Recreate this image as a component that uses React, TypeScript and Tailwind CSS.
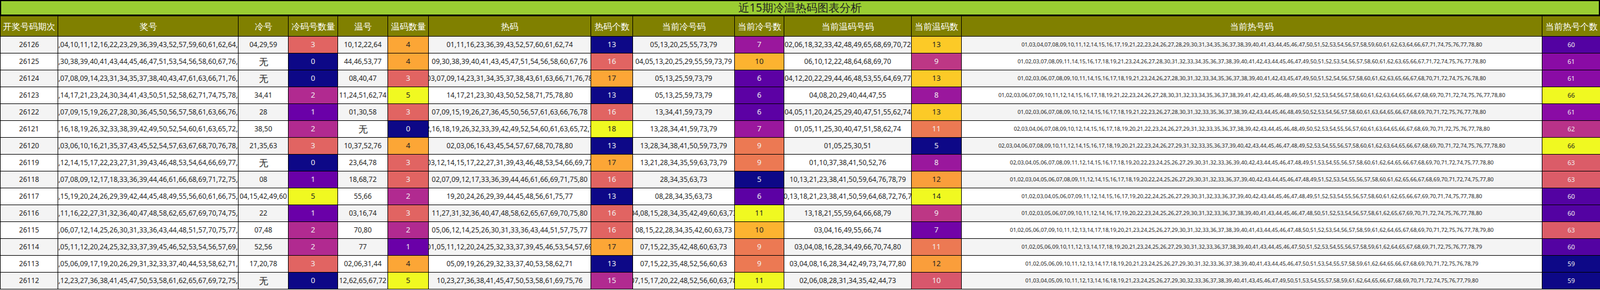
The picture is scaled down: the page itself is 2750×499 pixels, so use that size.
import React from "react";

const stops = ["#0d0887","#41049d","#6a00a8","#8f0da4","#b12a90","#cc4778","#e16462","#f2844b","#fca636","#fcce25","#f0f921"];
function hex(h: string) { return [1,3,5].map(i => parseInt(h.slice(i, i+2), 16)); }
function plasma(t: number) {
  const x = Math.max(0, Math.min(1, t)) * 10;
  const i = Math.min(9, Math.floor(x));
  const f = x - i;
  const a = hex(stops[i]), b = hex(stops[i+1]);
  const c = a.map((v, k) => Math.round(v + (b[k] - v) * f));
  return `rgb(${c[0]},${c[1]},${c[2]})`;
}

type Row = [string,string,string,number,string,number,string,number,string,number,string,number,string,number];
const rows: Row[] = [
["26126","01,04,10,11,12,16,22,23,29,36,39,43,52,57,59,60,61,62,64,74","04,29,59",3,"10,12,22,64",4,"01,11,16,23,36,39,43,52,57,60,61,62,74",13,"05,13,20,25,55,73,79",7,"02,06,18,32,33,42,48,49,65,68,69,70,72",13,"01,03,04,07,08,09,10,11,12,14,15,16,17,19,21,22,23,24,26,27,28,29,30,31,34,35,36,37,38,39,40,41,43,44,45,46,47,50,51,52,53,54,56,57,58,59,60,61,62,63,64,66,67,71,74,75,76,77,78,80",60],
["26125","09,30,38,39,40,41,43,44,45,46,47,51,53,54,56,58,60,67,76,77","无",0,"44,46,53,77",4,"09,30,38,39,40,41,43,45,47,51,54,56,58,60,67,76",16,"04,05,13,20,25,29,55,59,73,79",10,"06,10,12,22,48,64,68,69,70",9,"01,02,03,07,08,09,11,14,15,16,17,18,19,21,23,24,26,27,28,30,31,32,33,34,35,36,37,38,39,40,41,42,43,44,45,46,47,49,50,51,52,53,54,56,57,58,60,61,62,63,65,66,67,71,72,74,75,76,77,78,80",61],
["26124","03,07,08,09,14,23,31,34,35,37,38,40,43,47,61,63,66,71,76,78","无",0,"08,40,47",3,"03,07,09,14,23,31,34,35,37,38,43,61,63,66,71,76,78",17,"05,13,25,59,73,79",6,"04,12,20,22,29,44,46,48,53,55,64,69,77",13,"01,02,03,06,07,08,09,10,11,14,15,16,17,18,19,21,23,24,26,27,28,30,31,32,33,34,35,36,37,38,39,40,41,42,43,45,47,49,50,51,52,54,56,57,58,60,61,62,63,65,66,67,68,70,71,72,74,75,76,78,80",61],
["26123","11,14,17,21,23,24,30,34,41,43,50,51,52,58,62,71,74,75,78,80","34,41",2,"11,24,51,62,74",5,"14,17,21,23,30,43,50,52,58,71,75,78,80",13,"05,13,25,59,73,79",6,"04,08,20,29,40,44,47,55",8,"01,02,03,06,07,09,10,11,12,14,15,16,17,18,19,21,22,23,24,26,27,28,30,31,32,33,34,35,36,37,38,39,41,42,43,45,46,48,49,50,51,52,53,54,56,57,58,60,61,62,63,64,65,66,67,68,69,70,71,72,74,75,76,77,78,80",66],
["26122","01,07,09,15,19,26,27,28,30,36,45,50,56,57,58,61,63,66,76,78","28",1,"01,30,58",3,"07,09,15,19,26,27,36,45,50,56,57,61,63,66,76,78",16,"13,34,41,59,73,79",6,"04,05,11,20,24,25,29,40,47,51,55,62,74",13,"01,02,03,06,07,08,09,10,12,14,15,16,17,18,19,21,22,23,26,27,28,30,31,32,33,35,36,37,38,39,42,43,44,45,46,48,49,50,52,53,54,56,57,58,60,61,63,64,65,66,67,68,69,70,71,72,75,76,77,78,80",61],
["26121","02,16,18,19,26,32,33,38,39,42,49,50,52,54,60,61,63,65,72,78","38,50",2,"无",0,"02,16,18,19,26,32,33,39,42,49,52,54,60,61,63,65,72,78",18,"13,28,34,41,59,73,79",7,"01,05,11,25,30,40,47,51,58,62,74",11,"02,03,04,06,07,08,09,10,12,14,15,16,17,18,19,20,21,22,23,24,26,27,29,31,32,33,35,36,37,38,39,42,43,44,45,46,48,49,50,52,53,54,55,56,57,60,61,63,64,65,66,67,68,69,70,71,72,75,76,77,78,80",62],
["26120","02,03,06,10,16,21,35,37,43,45,52,54,57,63,67,68,70,76,78,80","21,35,63",3,"10,37,52,76",4,"02,03,06,16,43,45,54,57,67,68,70,78,80",13,"13,28,34,38,41,50,59,73,79",9,"01,05,25,30,51",5,"02,03,04,06,07,08,09,10,11,12,14,15,16,17,18,19,20,21,22,23,24,26,27,29,31,32,33,35,36,37,39,40,42,43,44,45,46,47,48,49,52,53,54,55,56,57,58,60,61,62,63,64,65,66,67,68,69,70,71,72,74,75,76,77,78,80",66],
["26119","03,12,14,15,17,22,23,27,31,39,43,46,48,53,54,64,66,69,77,78","无",0,"23,64,78",3,"03,12,14,15,17,22,27,31,39,43,46,48,53,54,66,69,77",17,"13,21,28,34,35,59,63,73,79",9,"01,10,37,38,41,50,52,76",8,"02,03,04,05,06,07,08,09,11,12,14,15,16,17,18,19,20,22,23,24,25,26,27,29,30,31,32,33,36,39,40,42,43,44,45,46,47,48,49,51,53,54,55,56,57,58,60,61,62,64,65,66,67,68,69,70,71,72,74,75,77,78,80",63],
["26118","02,07,08,09,12,17,18,33,36,39,44,46,61,66,68,69,71,72,75,80","08",1,"18,68,72",3,"02,07,09,12,17,33,36,39,44,46,61,66,69,71,75,80",16,"28,34,35,63,73",5,"10,13,21,23,38,41,50,59,64,76,78,79",12,"01,02,03,04,05,06,07,08,09,11,12,14,15,16,17,18,19,20,22,24,25,26,27,29,30,31,32,33,36,37,39,40,42,43,44,45,46,47,48,49,51,52,53,54,55,56,57,58,60,61,62,65,66,67,68,69,70,71,72,74,75,77,80",63],
["26117","04,15,19,20,24,26,29,39,42,44,45,48,49,55,56,60,61,66,75,77","04,15,42,49,60",5,"55,66",2,"19,20,24,26,29,39,44,45,48,56,61,75,77",13,"08,28,34,35,63,73",6,"10,13,18,21,23,38,41,50,59,64,68,72,76,79",14,"01,02,03,04,05,06,07,09,11,12,14,15,16,17,19,20,22,24,25,26,27,29,30,31,32,33,36,37,39,40,42,43,44,45,46,47,48,49,51,52,53,54,55,56,57,58,60,61,62,65,66,67,69,70,71,74,75,77,78,80",60],
["26116","03,11,16,22,27,31,32,36,40,47,48,58,62,65,67,69,70,74,75,80","22",1,"03,16,74",3,"11,27,31,32,36,40,47,48,58,62,65,67,69,70,75,80",16,"04,08,15,28,34,35,42,49,60,63,73",11,"13,18,21,55,59,64,66,68,79",9,"01,02,03,05,06,07,09,10,11,12,14,16,17,19,20,22,23,24,25,26,27,29,30,31,32,33,36,37,38,39,40,41,43,44,45,46,47,48,50,51,52,53,54,56,57,58,61,62,65,67,69,70,71,72,74,75,76,77,78,80",60],
["26115","05,06,07,12,14,25,26,30,31,33,36,43,44,48,51,57,70,75,77,80","07,48",2,"70,80",2,"05,06,12,14,25,26,30,31,33,36,43,44,51,57,75,77",16,"08,15,22,28,34,35,42,60,63,73",10,"03,04,16,49,55,66,74",7,"01,02,05,06,07,09,10,11,12,13,14,17,18,19,20,21,23,24,25,26,27,29,30,31,32,33,36,37,38,39,40,41,43,44,45,46,47,48,50,51,52,53,54,56,57,58,59,61,62,64,65,67,68,69,70,71,72,75,76,77,78,79,80",63],
["26114","01,05,11,12,20,24,25,32,33,37,39,45,46,52,53,54,56,57,69,77","52,56",2,"77",1,"01,05,11,12,20,24,25,32,33,37,39,45,46,53,54,57,69",17,"07,15,22,35,42,48,60,63,73",9,"03,04,08,16,28,34,49,66,70,74,80",11,"01,02,05,06,09,10,11,12,13,14,17,18,19,20,21,23,24,25,26,27,29,30,31,32,33,36,37,38,39,40,41,43,44,45,46,47,50,51,52,53,54,55,56,57,58,59,61,62,64,65,67,68,69,71,72,75,76,77,78,79",60],
["26113","02,05,06,09,17,19,20,26,29,31,32,33,37,40,44,53,58,62,71,78","17,20,78",3,"02,06,31,44",4,"05,09,19,26,29,32,33,37,40,53,58,62,71",13,"07,15,22,35,48,52,56,60,63",9,"03,04,08,16,28,34,42,49,73,74,77,80",12,"01,02,05,06,09,10,11,12,13,14,17,18,19,20,21,23,24,25,26,27,29,30,31,32,33,36,37,38,39,40,41,43,44,45,46,47,50,51,53,54,55,57,58,59,61,62,64,65,66,67,68,69,70,71,72,75,76,78,79",59],
["26112","10,12,23,27,36,38,41,45,47,50,53,58,61,62,65,67,69,72,75,76","无",0,"12,62,65,67,72",5,"10,23,27,36,38,41,45,47,50,53,58,61,69,75,76",15,"07,15,17,20,22,48,52,56,60,63,78",11,"02,06,08,28,31,34,35,42,44,73",10,"01,03,04,05,09,10,11,12,13,14,16,18,19,21,23,24,25,26,27,29,30,32,33,36,37,38,39,40,41,43,45,46,47,49,50,51,53,54,55,57,58,59,61,62,64,65,66,67,68,69,70,71,72,74,75,76,77,79,80",59],
];

const headers = ["开奖号码期次","奖号","冷号","冷码号数量","温号","温码数量","热码","热码个数","当前冷号码","当前冷号数","当前温码号码","当前温码数","当前热号码","当前热号个数"];
const numCols = [3,5,7,9,11,13];
const ranges: Record<number,[number,number]> = {};
numCols.forEach(c => { const v = rows.map(r => r[c] as number); ranges[c] = [Math.min(...v), Math.max(...v)]; });

const gridCols = "grid grid-cols-[99px_310px_86px_85px_86px_70px_279px_72px_175px_85px_219px_86px_998px_100px]";
const serif = "font-['Liberation_Serif','Noto_Sans_CJK_SC',serif] text-[12px]";
const dejavu = "font-['DejaVu_Sans',sans-serif]";
const cjk = "font-['Noto_Sans_CJK_SC',sans-serif]";

export default function App() {
  return (
    <div className="w-[2750px] h-[499px] bg-white overflow-hidden">
      <div className={`h-[28px] bg-[#9acd32] border-2 border-black border-b-[3px] flex items-center justify-center text-[19px] text-[#222] ${cjk}`}>近15期冷温热码图表分析</div>
      <div className={`${gridCols} h-[35px] bg-[#808000] border-l border-black`}>
        {headers.map((h, i) => (
          <div key={i} className={`border-r border-b border-black flex items-center justify-center text-white text-[15px] leading-none whitespace-nowrap overflow-hidden ${cjk}`}>{h}</div>
        ))}
      </div>
      {rows.map((r, ri) => (
        <div key={ri} className={`${gridCols} h-[29px] border-l border-black ${ri % 2 === 0 ? "bg-[#f4f4f4]" : "bg-white"}`}>
          {r.map((v, ci) => {
            if (numCols.includes(ci)) {
              const [mn, mx] = ranges[ci];
              const t = (Number(v) - mn) / (mx - mn);
              return (
                <div key={ci} className={`border-r border-b border-black flex items-center justify-center ${ci === 13 ? `${dejavu} text-[11px]` : `${serif} text-[13px]`} ${t > 0.7 ? "text-[#222]" : "text-[#f0f0f0]"}`} style={{ backgroundColor: plasma(t) }}>{v}</div>
              );
            }
            const isNone = v === "无";
            return (
              <div key={ci} className={`border-r border-b border-black flex items-center justify-center whitespace-nowrap overflow-hidden text-[#222] ${ci === 12 ? `${dejavu} text-[9.4px]` : isNone ? `${cjk} text-[16px]` : serif}`}>{v}</div>
            );
          })}
        </div>
      ))}
    </div>
  );
}
